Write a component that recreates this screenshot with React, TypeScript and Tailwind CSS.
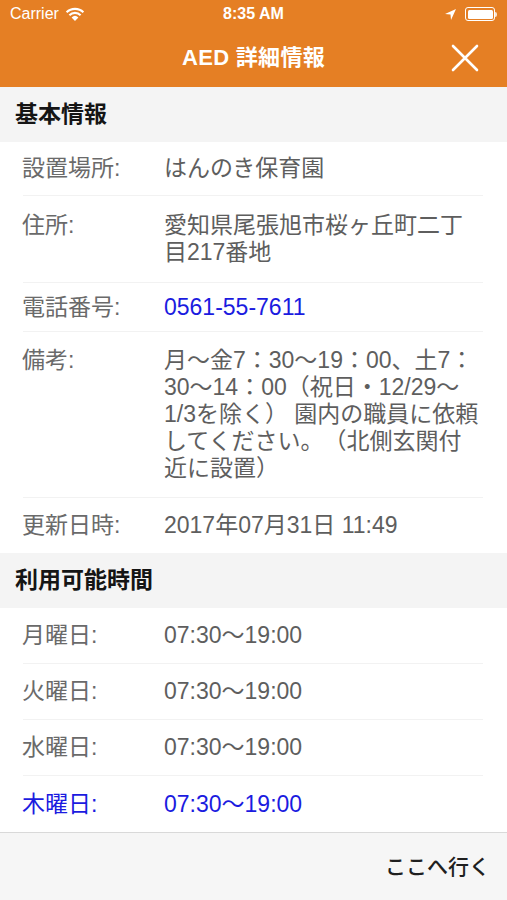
import React from "react";

const FONT = { fontFamily: '"Liberation Sans", "Noto Sans CJK JP", sans-serif' };

function Row({
  label,
  lines,
  h,
  blue = false,
  valueBlue = false,
  last = false,
}: {
  label: string;
  lines: string[];
  h: string;
  blue?: boolean;
  valueBlue?: boolean;
  last?: boolean;
}) {
  return (
    <div className="pl-[23px] pr-[24px]">
      <div
        className={`flex flex-col justify-center ${h} ${
          last ? "" : "border-b border-[#f2f2f2]"
        }`}
      >
        <div className="flex items-start text-[23px] leading-[27px] [text-spacing-trim:space-all]">
          <div
            className={`w-[142px] shrink-0 -ml-px whitespace-nowrap ${
              blue ? "text-[#1b1be0]" : "text-[#6a6a6a]"
            }`}
          >
            {label}
          </div>
          <div className={blue || valueBlue ? "text-[#1b1be0]" : "text-[#5e5e5e]"}>
            {lines.map((l, i) => (
              <div key={i} className="whitespace-pre">
                {l}
              </div>
            ))}
          </div>
        </div>
      </div>
    </div>
  );
}

function SectionHeader({ title, h }: { title: string; h: string }) {
  return (
    <div className={`bg-[#f4f4f4] ${h} flex items-center pl-[15px]`}>
      <span className="text-[23px] font-bold text-[#151515]">{title}</span>
    </div>
  );
}

export default function App() {
  return (
    <div className="w-[507px] h-[900px] bg-white flex flex-col overflow-hidden" style={FONT}>
      {/* status bar */}
      <div className="bg-[#e57f24] h-[28px] flex items-center px-[10px] text-white relative">
        <span className="text-[16px]">Carrier</span>
        <svg width="20" height="15" viewBox="0 0 20 15" className="ml-[6px]">
          <path d="M10 14 L6.6 10.4 A5 5 0 0 1 13.4 10.4 Z" fill="white" />
          <path d="M4.4 8.2 A8 8 0 0 1 15.6 8.2" stroke="white" strokeWidth="2.1" fill="none" />
          <path d="M1.6 5.3 A12 12 0 0 1 18.4 5.3" stroke="white" strokeWidth="2.1" fill="none" />
        </svg>
        <span className="absolute left-1/2 -translate-x-1/2 text-[16px] font-semibold">8:35 AM</span>
        <div className="ml-auto flex items-center gap-[8px]">
          <svg width="13" height="13" viewBox="0 0 13 13">
            <path d="M12 1 L1 6 L6.5 6.5 L7 12 Z" fill="white" />
          </svg>
          <div className="flex items-center">
            <div className="w-[30px] h-[14px] rounded-[3px] border border-white p-[1.5px]">
              <div className="w-full h-full bg-white rounded-[1.5px]" />
            </div>
            <div className="w-[2px] h-[5px] bg-white/80 rounded-r-sm" />
          </div>
        </div>
      </div>
      {/* nav bar */}
      <div className="bg-[#e57f24] h-[59px] relative flex items-center justify-center">
        <span className="text-white text-[22px] font-bold tracking-[0.3px]">AED 詳細情報</span>
        <svg
          width="28"
          height="28"
          viewBox="0 0 28 28"
          className="absolute right-[28px] top-1/2 -translate-y-1/2"
        >
          <path d="M2 2 L26 26 M26 2 L2 26" stroke="white" strokeWidth="2.6" strokeLinecap="round" />
        </svg>
      </div>

      <SectionHeader title="基本情報" h="h-[55px]" />
      <Row label="設置場所:" lines={["はんのき保育園"]} h="h-[54px]" />
      <Row label="住所:" lines={["愛知県尾張旭市桜ヶ丘町二丁", "目217番地"]} h="h-[87px]" />
      <Row label="電話番号:" lines={["0561-55-7611"]} h="h-[49px]" valueBlue />
      <Row
        label="備考:"
        lines={[
          "月～金7：30～19：00、土7：",
          "30～14：00（祝日・12/29～",
          "1/3を除く） 園内の職員に依頼",
          "してください。（北側玄関付",
          "近に設置）",
        ]}
        h="h-[166px]"
      />
      <Row label="更新日時:" lines={["2017年07月31日 11:49"]} h="h-[55px]" last />

      <SectionHeader title="利用可能時間" h="h-[55px]" />
      <Row label="月曜日:" lines={["07:30～19:00"]} h="h-[56px]" />
      <Row label="火曜日:" lines={["07:30～19:00"]} h="h-[56px]" />
      <Row label="水曜日:" lines={["07:30～19:00"]} h="h-[56px]" />
      <Row label="木曜日:" lines={["07:30～19:00"]} h="h-[56px]" blue last />

      {/* footer */}
      <div className="flex-1 bg-[#f6f6f6] border-t border-[#d9d9d9] flex items-center justify-end pr-[17px]">
        <span className="text-[21px] font-medium text-[#1f1f1f]">ここへ行く</span>
      </div>
    </div>
  );
}
